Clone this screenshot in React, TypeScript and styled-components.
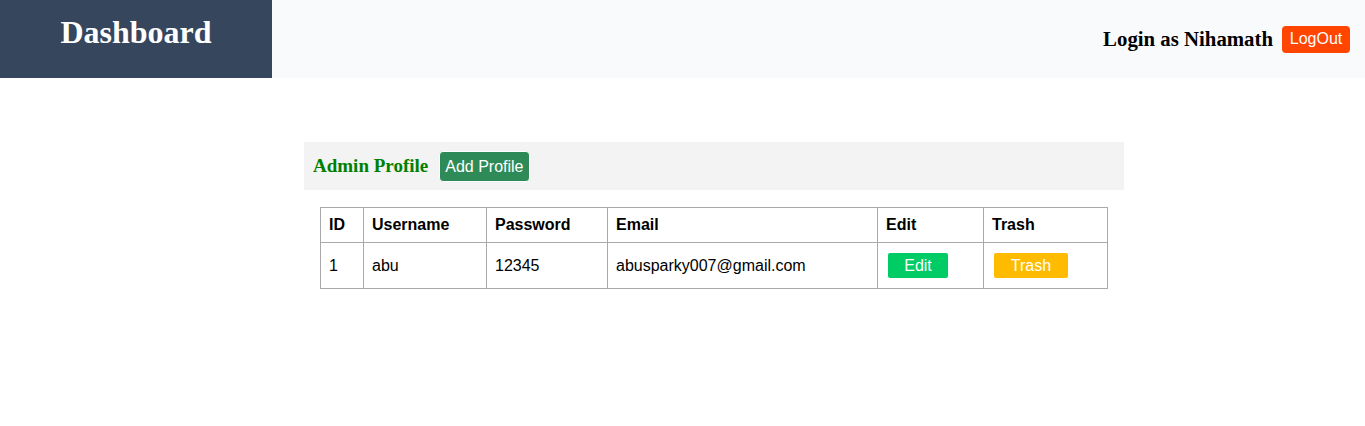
import React from "react";
import styled, { createGlobalStyle } from "styled-components";

const Global = createGlobalStyle`
  html, body { margin: 0; padding: 0; background: #ffffff; }
  body { font-family: "Liberation Serif", "Times New Roman", serif; }
`;

const Header = styled.header`
  display: flex;
  height: 78px;
`;

const Brand = styled.div`
  width: 272px;
  background: #36465d;
  display: flex;
  justify-content: center;
  align-items: flex-start;
`;

const BrandTitle = styled.h1`
  margin: 14px 0 0;
  color: #ffffff;
  font-family: "Liberation Serif", "Times New Roman", serif;
  font-size: 32px;
  font-weight: bold;
  line-height: 37px;
`;

const TopBar = styled.div`
  flex: 1;
  background: #f9fafc;
  display: flex;
  justify-content: flex-end;
  align-items: center;
  gap: 9px;
  padding-right: 15px;
`;

const UserLabel = styled.span`
  font-family: "Liberation Serif", "Times New Roman", serif;
  font-weight: bold;
  font-size: 20.8px;
  color: #000;
`;

const Button = styled.button<{ $bg: string; $w?: number; $h?: number }>`
  background: ${(p) => p.$bg};
  color: #ffffff;
  border: none;
  border-radius: 3px;
  font-family: "Liberation Sans", Arial, sans-serif;
  font-size: 16px;
  padding: 0;
  width: ${(p) => (p.$w ? `${p.$w}px` : "auto")};
  height: ${(p) => (p.$h ? `${p.$h}px` : "auto")};
  cursor: pointer;
`;

const LogOutButton = styled(Button)`
  border-radius: 4px;
`;

const Main = styled.main`
  margin: 64px 0 0 304px;
  width: 820px;
`;

const Panel = styled.div`
  background: #f3f3f3;
  height: 48px;
  display: flex;
  align-items: center;
  gap: 11px;
  padding-left: 9px;
`;

const PanelTitle = styled.h3`
  margin: 0;
  color: #008000;
  font-family: "Liberation Serif", "Times New Roman", serif;
  font-size: 19px;
  font-weight: bold;
`;

const AddButton = styled(Button)`
  border: 1px solid #ffffff;
  border-radius: 4px;
  padding: 0 5px;
  height: 31px;
  margin-top: 1px;
`;

const Table = styled.table`
  margin: 17px 0 0 16px;
  border-collapse: collapse;
  border: 1px solid #a9a9a9;
  font-family: "Liberation Sans", Arial, sans-serif;
  font-size: 16px;
  color: #000;
`;

const Th = styled.th<{ $w: number }>`
  width: ${(p) => p.$w}px;
  box-sizing: border-box;
  border: 1px solid #a9a9a9;
  text-align: left;
  font-weight: bold;
  padding: 0 8px;
  height: 35px;
`;

const Td = styled.td`
  border: 1px solid #a9a9a9;
  padding: 0 8px;
  height: 45px;
`;

const RowButton = styled(Button)`
  border-radius: 2px;
  margin-left: 2px;
  display: block;
`;

const columns: [string, number][] = [
  ["ID", 43],
  ["Username", 123],
  ["Password", 121],
  ["Email", 270],
  ["Edit", 106],
  ["Trash", 124],
];

export default function App() {
  return (
    <>
      <Global />
      <Header>
        <Brand>
          <BrandTitle>Dashboard</BrandTitle>
        </Brand>
        <TopBar>
          <UserLabel>Login as Nihamath</UserLabel>
          <LogOutButton $bg="#ff4500" $w={68} $h={27}>
            LogOut
          </LogOutButton>
        </TopBar>
      </Header>
      <Main>
        <Panel>
          <PanelTitle>Admin Profile</PanelTitle>
          <AddButton $bg="#2e8b57">Add Profile</AddButton>
        </Panel>
        <Table>
          <thead>
            <tr>
              {columns.map(([name, w]) => (
                <Th key={name} $w={w}>
                  {name}
                </Th>
              ))}
            </tr>
          </thead>
          <tbody>
            <tr>
              <Td>1</Td>
              <Td>abu</Td>
              <Td>12345</Td>
              <Td>abusparky007@gmail.com</Td>
              <Td>
                <RowButton $bg="#00cc66" $w={60} $h={25}>
                  Edit
                </RowButton>
              </Td>
              <Td>
                <RowButton $bg="#ffbb00" $w={74} $h={25}>
                  Trash
                </RowButton>
              </Td>
            </tr>
          </tbody>
        </Table>
      </Main>
    </>
  );
}
